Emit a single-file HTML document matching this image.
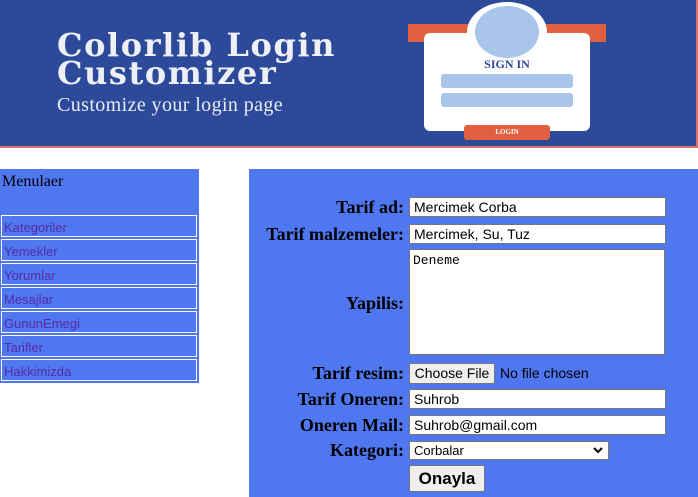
<!DOCTYPE html>
<html><head><meta charset="utf-8"><style>
*{box-sizing:border-box}
body{margin:0;width:698px;height:497px;overflow:hidden;background:#fff;position:relative;font-family:"Liberation Serif",serif}
.ab{position:absolute}
#ban{left:0;top:0;width:698px;height:148px;background:#2c4a99;border-right:2px solid #d9706a;border-bottom:2px solid #d9706a;overflow:hidden}
.side{left:0;top:169px;width:199px;height:214px;background:#4e77f0}
.side .t{left:2px;top:4px;font-size:16px;color:#000}
.item{position:absolute;left:1px;width:196px;height:22px;border:1px solid #fff;color:#5a2ba6;font:13px "Liberation Sans",sans-serif;padding:4px 0 0 2px}
.main{left:249px;top:169px;width:449px;height:328px;background:#4e77f0}
.lb{position:absolute;right:294px;font-weight:bold;font-size:18px;color:#000;white-space:nowrap}
.in{position:absolute;left:409px;width:257px;height:20px;background:#fff;border:1px solid #767676;font:14px "Liberation Sans",sans-serif;padding:1px 0 0 4px;color:#000}
.btn{position:absolute;background:#efefef;border:1px solid #767676;border-radius:2px;font-family:"Liberation Sans",sans-serif;color:#000;text-align:center}
</style></head><body>
<div id="ban" class="ab">
 <div class="ab" style="left:57px;top:31px;color:#eef0f6;font:bold 32px/28px 'DejaVu Serif','Liberation Serif',serif;letter-spacing:1.6px">Colorlib Login<br>Customizer</div>
 <div class="ab" style="left:57px;top:94px;color:#e8ecf5;font:20px 'Liberation Serif',serif;letter-spacing:0.4px">Customize your login page</div>
 <div class="ab" style="left:408px;top:24px;width:198px;height:18px;background:#e0603f"></div>
 <div class="ab" style="left:424px;top:33px;width:166px;height:98px;background:#fff;border-radius:6px"></div>
 <div class="ab" style="left:467px;top:2px;width:80px;height:60px;border-radius:50%;background:#fff"></div>
 <div class="ab" style="left:475px;top:6px;width:64px;height:52px;border-radius:50%;background:#a9c5ea"></div>
 <div class="ab" style="left:424px;top:57px;width:166px;text-align:center;color:#2c4a99;font:bold 12px 'Liberation Serif',serif">SIGN IN</div>
 <div class="ab" style="left:441px;top:74px;width:132px;height:14px;background:#a9c5ea;border-radius:3px"></div>
 <div class="ab" style="left:441px;top:93px;width:132px;height:14px;background:#a9c5ea;border-radius:3px"></div>
 <div class="ab" style="left:464px;top:125px;width:86px;height:15px;background:#e0603f;border-radius:3px;color:#fff;font:bold 7px/15px 'Liberation Serif',serif;text-align:center">LOGIN</div>
</div>
<div class="ab side">
 <div class="ab t">Menulaer</div>
 <div class="item" style="top:46px">Kategoriler</div>
 <div class="item" style="top:70px">Yemekler</div>
 <div class="item" style="top:94px">Yorumlar</div>
 <div class="item" style="top:118px">Mesajlar</div>
 <div class="item" style="top:142px">GununEmegi</div>
 <div class="item" style="top:166px">Tarifler</div>
 <div class="item" style="top:190px">Hakkimizda</div>
</div>
<div class="ab main"></div>
<div class="lb" style="top:197px">Tarif ad:</div>
<div class="in" style="top:197px">Mercimek Corba</div>
<div class="lb" style="top:224px">Tarif malzemeler:</div>
<div class="in" style="top:224px">Mercimek, Su, Tuz</div>
<div class="lb" style="top:293px">Yapilis:</div>
<div class="in" style="top:249px;width:256px;height:106px;font:13px 'Liberation Mono',monospace;padding:3px 3px">Deneme</div>
<div class="lb" style="top:363px">Tarif resim:</div>
<div class="btn" style="left:409px;top:363px;width:86px;height:21px;font-size:14px;line-height:19px">Choose File</div>
<div class="ab" style="left:500px;top:365px;font:14px 'Liberation Sans',sans-serif">No file chosen</div>
<div class="lb" style="top:389px">Tarif Oneren:</div>
<div class="in" style="top:389px">Suhrob</div>
<div class="lb" style="top:415px">Oneren Mail:</div>
<div class="in" style="top:415px">Suhrob@gmail.com</div>
<div class="lb" style="top:440px">Kategori:</div>
<div class="in" style="top:441px;width:200px;height:19px;font-size:13px;padding-top:1px">Corbalar<svg style="position:absolute;right:5px;top:5px" width="10" height="7" viewBox="0 0 10 7"><path d="M1 1L5 5L9 1" stroke="#000" stroke-width="2" fill="none"/></svg></div>
<div class="btn" style="left:409px;top:465px;width:76px;height:27px;font-weight:bold;font-size:17px;line-height:25px">Onayla</div>
</body></html>
